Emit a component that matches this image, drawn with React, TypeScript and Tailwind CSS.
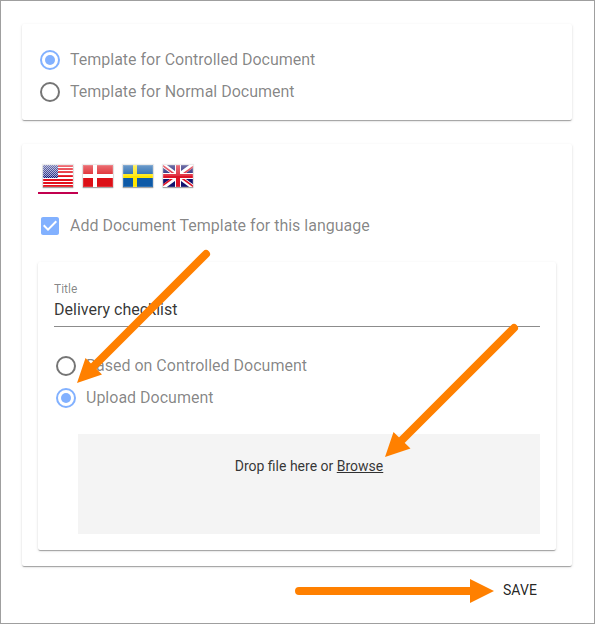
import React from 'react';

const CARD =
  'rounded-[2px] bg-white shadow-[0_2px_1px_-1px_rgba(0,0,0,0.2),0_1px_1px_0_rgba(0,0,0,0.14),0_1px_3px_0_rgba(0,0,0,0.12)]';

function Radio({ label, checked }: { label: string; checked?: boolean }) {
  return (
    <label className="flex h-8 items-center gap-2 text-base text-black/49">
      <svg viewBox="0 0 24 24" className={checked ? 'size-6 text-[#82b1ff]' : 'size-6 text-[#757575]'}>
        <circle cx="12" cy="12" r="9" fill="none" stroke="currentColor" strokeWidth="2" />
        {checked && <circle cx="12" cy="12" r="5" fill="currentColor" />}
      </svg>
      <span>{label}</span>
    </label>
  );
}

function Gloss() {
  return (
    <>
      <rect width="30" height="11" fill="url(#gloss)" />
      <rect x="0.5" y="0.5" width="29" height="21" fill="none" stroke="#fff" strokeOpacity="0.15" />
    </>
  );
}

function UsFlag() {
  return (
    <>
      <rect width="30" height="22" fill="#fff" />
      {[0, 3, 6, 10, 14, 17, 20].map((y) => (
        <rect key={y} y={y} width="30" height="2" fill="#e3101c" />
      ))}
      <rect width="15" height="13" fill="#10187c" />
      <rect width="15" height="13" fill="url(#stars)" />
    </>
  );
}

function CrossFlag({ field, cross }: { field: string; cross: string }) {
  return (
    <>
      <rect width="30" height="22" fill={field} />
      <path d="M10 0h4v22h-4zM0 9h30v4H0z" fill={cross} />
    </>
  );
}

function UkFlag() {
  return (
    <>
      <rect width="30" height="22" fill="#12126e" />
      <path d="M0 0 30 22M30 0 0 22" stroke="#fff" strokeWidth="4.5" />
      <path d="M-1 0 14 11M31 1 16 12M31 22 16 11M-1 21 14 10" stroke="#dc1428" strokeWidth="1.6" />
      <path d="M12 0h6v22h-6zM0 8h30v6H0z" fill="#fff" />
      <path d="M13 0h4v22h-4zM0 9h30v4H0z" fill="#dc1428" />
    </>
  );
}

function FlagTab({ active, children }: { active?: boolean; children: React.ReactNode }) {
  return (
    <div className={`flex h-[34px] w-10 justify-center border-b-2 pt-[5px] ${active ? 'border-[#c2004f]' : 'border-transparent'}`}>
      <svg
        viewBox="0 0 30 22"
        className="h-[22px] w-[30px] shadow-[0_0_1px_1px_rgba(0,0,0,0.08),0_1px_1px_rgba(0,0,0,0.3)]"
      >
        {children}
        <Gloss />
      </svg>
    </div>
  );
}

export default function App() {
  return (
    <div
      className="relative h-[624px] w-[595px] overflow-hidden border border-[#9f9f9f] bg-white px-[21px] pt-[23px] text-black/80"
      style={{ fontFamily: 'Roboto, "Liberation Sans", sans-serif' }}
    >
      <svg className="absolute size-0">
        <defs>
          <linearGradient id="gloss" x1="0" y1="0" x2="0" y2="1">
            <stop offset="0" stopColor="#fff" stopOpacity="0.4" />
            <stop offset="1" stopColor="#fff" stopOpacity="0.12" />
          </linearGradient>
          <pattern id="stars" width="2" height="2" patternUnits="userSpaceOnUse">
            <path d="M0 0h1v1H0zM1 1h1v1H1z" fill="#fff" fillOpacity="0.6" />
          </pattern>
        </defs>
      </svg>

      <section className={`${CARD} h-24 w-[550px] px-4 pt-5`}>
        <Radio label="Template for Controlled Document" checked />
        <Radio label="Template for Normal Document" />
      </section>

      <section className={`${CARD} mt-6 h-[422px] w-[550px] px-4 pt-4`}>
        <nav className="flex">
          <FlagTab active><UsFlag /></FlagTab>
          <FlagTab><CrossFlag field="#dc1017" cross="#fff" /></FlagTab>
          <FlagTab><CrossFlag field="#0e5aa7" cross="#ffe600" /></FlagTab>
          <FlagTab><UkFlag /></FlagTab>
        </nav>

        <label className="mt-5 flex h-6 items-center gap-2 text-base text-black/49">
          <svg viewBox="0 0 24 24" className="size-6 text-[#82b1ff]">
            <path
              d="M10 17 5 12 6.41 10.59 10 14.17 17.59 6.58 19 8M19 3H5C3.89 3 3 3.89 3 5V19C3 20.1 3.9 21 5 21H19C20.1 21 21 20.1 21 19V5C21 3.89 20.1 3 19 3Z"
              fill="currentColor"
            />
          </svg>
          <span>Add Document Template for this language</span>
        </label>

        <div className={`${CARD} mt-6 h-72 w-[518px] px-4 pt-5`}>
          <div className="text-xs leading-[14px] text-black/49">Title</div>
          <div className="flex h-[31px] items-center border-b border-[#8c8c8c] pb-0.5 text-base">
            Delivery checklist
          </div>
          <div className="mt-[23px]">
            <Radio label="Based on Controlled Document" />
            <Radio label="Upload Document" checked />
          </div>
          <div className="mt-5 ml-6 h-[100px] bg-[#f4f4f4] pt-[22px] text-center text-sm leading-5">
            Drop file here or <span className="underline">Browse</span>
          </div>
        </div>
      </section>

      <div className="flex h-12 items-center justify-end pr-9 text-sm tracking-[0.1px] text-black/87">SAVE</div>

      <svg viewBox="0 0 595 624" className="pointer-events-none absolute -top-px -left-px h-[624px] w-[595px]">
        <g fill="#ff8000" stroke="#ff8000" strokeLinecap="round">
          <path d="M206 254 94 366M514 328 402 440M299 591H472" fill="none" strokeWidth="8" />
          <path d="M77 383 85.5 358 102 374.5ZM385 457 393.5 432 410.5 448.5ZM494 591 470 579V603Z" stroke="none" />
        </g>
      </svg>
    </div>
  );
}
